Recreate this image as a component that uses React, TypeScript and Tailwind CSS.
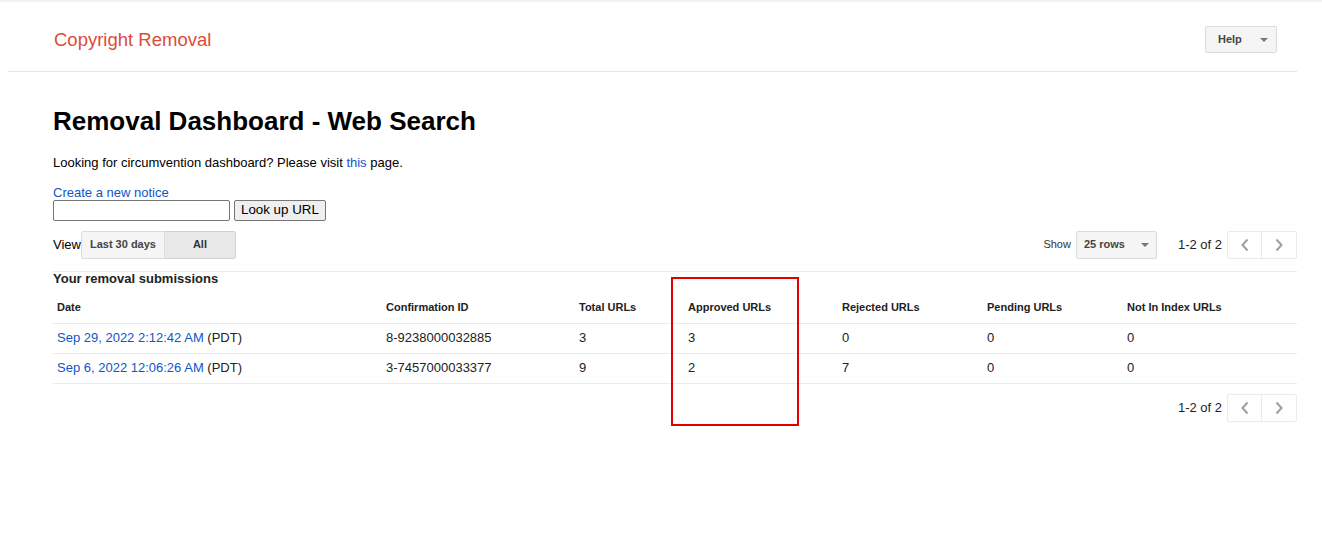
import React from 'react';

const rows = [
  { date: 'Sep 29, 2022 2:12:42 AM', id: '8-9238000032885', total: '3', approved: '3', rejected: '0', pending: '0', notIndexed: '0' },
  { date: 'Sep 6, 2022 12:06:26 AM', id: '3-7457000033377', total: '9', approved: '2', rejected: '7', pending: '0', notIndexed: '0' },
];

const cols = 'grid grid-cols-[329px_193px_109px_154px_145px_140px_174px]';

function Chevron({ dir }: { dir: 'left' | 'right' }) {
  return (
    <svg width="10" height="14" viewBox="0 0 10 14" fill="none">
      <path
        d={dir === 'left' ? 'M7.5 1.5L2.5 7l5 5.5' : 'M2.5 1.5L7.5 7l-5 5.5'}
        stroke="#9e9e9e"
        strokeWidth="2"
      />
    </svg>
  );
}

function Pager() {
  return (
    <div className="flex items-center">
      <span className="text-[13px] text-[#222] mr-[5px]">1-2 of 2</span>
      <div className="flex h-[28px] border border-[#ebebeb] rounded-[2px]">
        <button className="w-[34px] flex items-center justify-center border-r border-[#ebebeb]">
          <Chevron dir="left" />
        </button>
        <button className="w-[34px] flex items-center justify-center">
          <Chevron dir="right" />
        </button>
      </div>
    </div>
  );
}

export default function App() {
  return (
    <div className="relative min-h-[552px] bg-white text-[#222] font-['Liberation_Sans',Arial,sans-serif]">
      <div className="h-[2px] bg-[#f1f1f1]" />

      {/* Header */}
      <header className="ml-[8px] w-[1289px] h-[70px] border-b border-[#e5e5e5] flex items-center justify-between pl-[46px] pr-[20px] pt-[6px]">
        <span className="text-[18.5px] text-[#dd4b39]">Copyright Removal</span>
        <button className="h-[27px] w-[72px] flex items-center justify-between pl-[12px] pr-[8px] bg-[#f5f5f5] border border-[#dcdcdc] rounded-[2px] text-[11px] font-bold text-[#444]">
          Help
          <span className="w-0 h-0 border-l-[4px] border-r-[4px] border-t-[4px] border-l-transparent border-r-transparent border-t-[#777]" />
        </button>
      </header>

      <main className="pl-[53px] pr-[25px]">
        <h1 className="text-[26px] font-bold text-black mt-[34px] leading-[30px]">Removal Dashboard - Web Search</h1>

        <p className="text-[13px] text-black mt-[17px]">
          Looking for circumvention dashboard? Please visit <a className="text-[#15c]">this</a> page.
        </p>

        <a className="block text-[13px] text-[#15c] mt-[12px] leading-[15px]">Create a new notice</a>
        <div className="flex items-center gap-[4px]">
          <input className="w-[177px] h-[21px] border border-[#767676] rounded-[2px] px-1" />
          <button className="h-[21px] px-[6px] text-[13.33px] text-black bg-[#efefef] border border-[#767676] rounded-[2px] leading-none">
            Look up URL
          </button>
        </div>

        {/* View + paging controls */}
        <div className="flex items-center justify-between mt-[10px] h-[28px]">
          <div className="flex items-center">
            <span className="text-[13px] text-black">View</span>
            <div className="flex h-[28px]">
              <button className="w-[84px] bg-[#f5f5f5] border border-[#dcdcdc] rounded-l-[2px] text-[11px] font-bold text-[#444]">
                Last 30 days
              </button>
              <button className="w-[71px] bg-[#e8e8e8] border border-l-0 border-[#d0d0d0] rounded-r-[2px] text-[11px] font-bold text-[#333]">
                All
              </button>
            </div>
          </div>
          <div className="flex items-center">
            <span className="text-[11px] text-[#333] mr-[5px]">Show</span>
            <button className="w-[81px] h-[28px] flex items-center justify-between pl-[7px] pr-[7px] bg-[#f5f5f5] border border-[#dcdcdc] rounded-[2px] text-[11px] font-bold text-[#444] mr-[21px]">
              25 rows
              <span className="w-0 h-0 border-l-[4px] border-r-[4px] border-t-[4px] border-l-transparent border-r-transparent border-t-[#777]" />
            </button>
            <Pager />
          </div>
        </div>

        <div className="border-t border-[#ebebeb] mt-[12px]">
          <h2 className="text-[13px] font-bold text-[#222] leading-[14px]">Your removal submissions</h2>

          <div className={`${cols} text-[11px] font-bold text-[#222] h-[38px] items-center pt-[6px] border-b border-[#ebebeb]`}>
            <div className="pl-[4px]">Date</div>
            <div className="pl-[4px]">Confirmation ID</div>
            <div className="pl-[4px]">Total URLs</div>
            <div className="pl-[4px]">Approved URLs</div>
            <div className="pl-[4px]">Rejected URLs</div>
            <div className="pl-[4px]">Pending URLs</div>
            <div className="pl-[4px]">Not In Index URLs</div>
          </div>

          {rows.map((r) => (
            <div key={r.id} className={`${cols} text-[13px] text-[#222] h-[30px] items-center border-b border-[#ebebeb]`}>
              <div className="pl-[4px]">
                <a className="text-[#15c]">{r.date}</a> (PDT)
              </div>
              <div className="pl-[4px]">{r.id}</div>
              <div className="pl-[4px]">{r.total}</div>
              <div className="pl-[4px]">{r.approved}</div>
              <div className="pl-[4px]">{r.rejected}</div>
              <div className="pl-[4px]">{r.pending}</div>
              <div className="pl-[4px]">{r.notIndexed}</div>
            </div>
          ))}

          <div className="flex justify-end mt-[10px]">
            <Pager />
          </div>
        </div>
      </main>

      {/* Annotation highlight */}
      <div className="absolute left-[671px] top-[277px] w-[128px] h-[149px] border-2 border-[#e00000]" />
    </div>
  );
}
